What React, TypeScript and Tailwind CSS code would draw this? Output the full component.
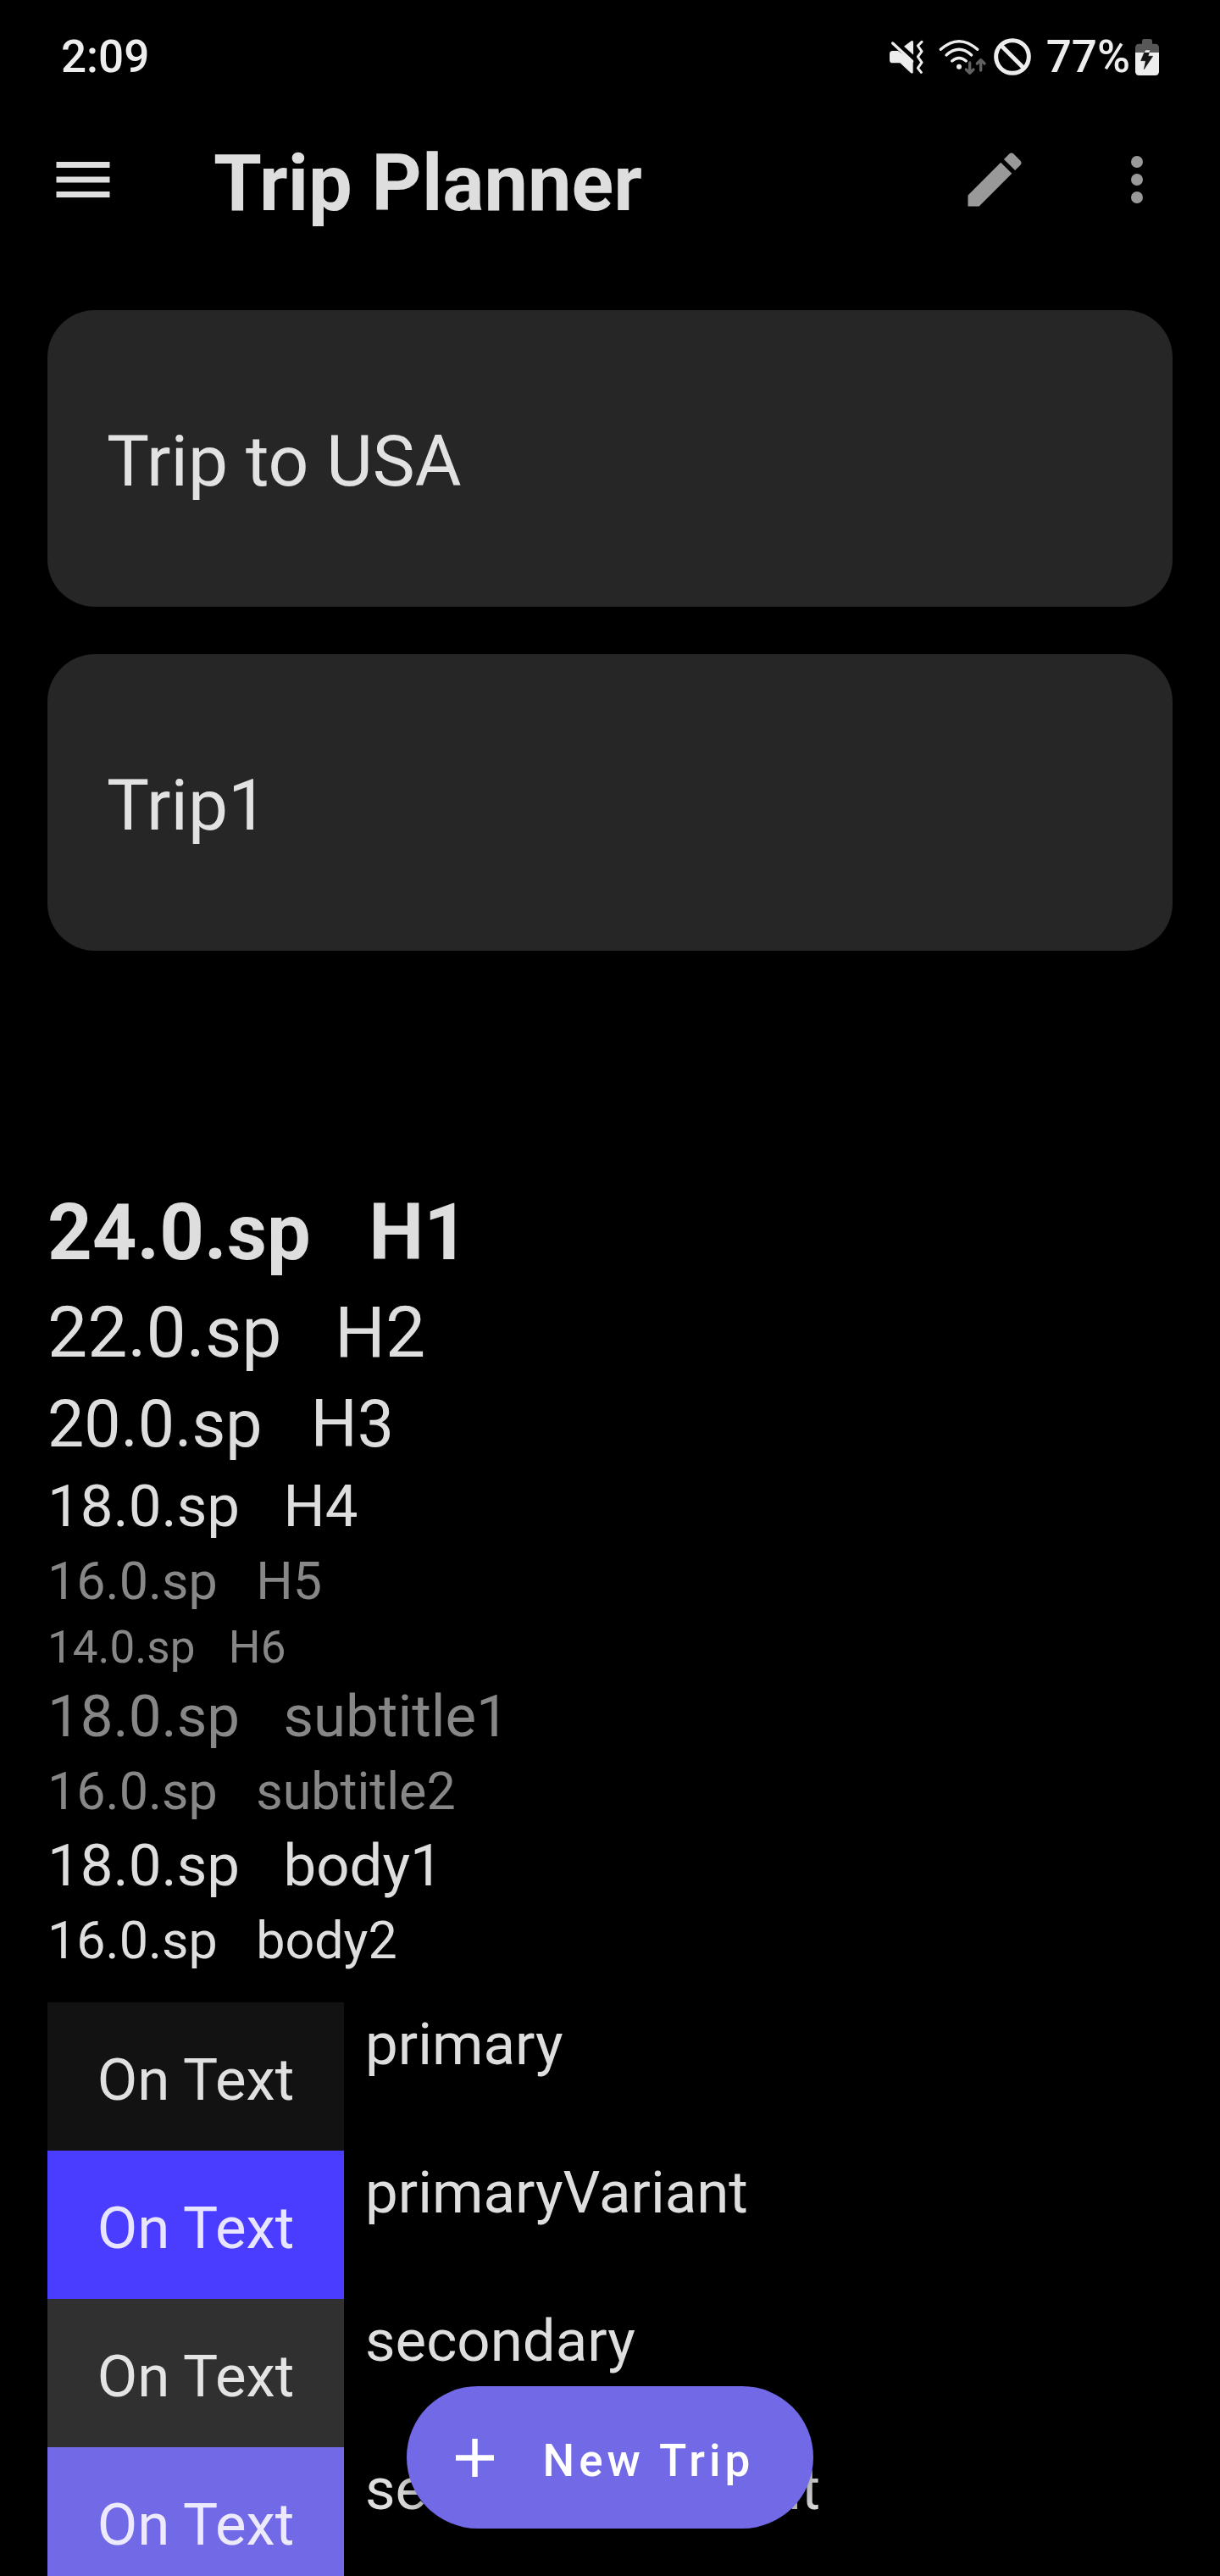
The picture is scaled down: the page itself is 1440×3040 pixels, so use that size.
import React from "react";

const trips = ["Trip to USA", "Trip1"];

const typography = [
  { size: "24.0.sp", name: "H1", style: "text-[92px] leading-[123px] font-bold text-[#dedede]" },
  { size: "22.0.sp", name: "H2", style: "text-[84px] leading-[114px] text-[#dedede]" },
  { size: "20.0.sp", name: "H3", style: "text-[77px] leading-[102px] text-[#dedede]" },
  { size: "18.0.sp", name: "H4", style: "text-[69px] leading-[92px] text-[#dedede]" },
  { size: "16.0.sp", name: "H5", style: "text-[61px] leading-[84px] text-[#878787]" },
  { size: "14.0.sp", name: "H6", style: "text-[53px] leading-[72px] text-[#878787]" },
  { size: "18.0.sp", name: "subtitle1", style: "text-[69px] leading-[92px] text-[#878787]" },
  { size: "16.0.sp", name: "subtitle2", style: "text-[61px] leading-[84px] text-[#878787]" },
  { size: "18.0.sp", name: "body1", style: "text-[69px] leading-[92px] text-[#dedede]" },
  { size: "16.0.sp", name: "body2", style: "text-[61px] leading-[84px] text-[#dedede]" },
];

const swatches = [
  { name: "primary", style: "bg-[#121212] text-[#e0e0e0]" },
  { name: "primaryVariant", style: "bg-[#4a3dff] text-[#e7e5ff]" },
  { name: "secondary", style: "bg-[#303030] text-[#e4e4e4]" },
  { name: "secondaryVariant", style: "bg-[#7169e6] text-[#eceafc]" },
];

function MuteIcon() {
  return (
    <svg viewBox="90 84 120 120" className="h-10 w-10" fill="#ededed" aria-hidden="true">
      <path d="M101 123h19L173 160v40q-3 5-8 1L127 166H101q-11 0-11-11v-21q0-11 11-11z" />
      <path d="M141 107 167 88q7-3 7 4v45z" />
      <path d="M112 92 180 153" stroke="#000" strokeWidth="9" />
      <path d="M101 96 170 160" stroke="#ededed" strokeWidth="10" strokeLinecap="round" />
      <path
        d="M204 91 190 105 204 125 190 144 204 164 190 184 202 199"
        fill="none"
        stroke="#ededed"
        strokeWidth="9"
        strokeLinecap="round"
        strokeLinejoin="round"
      />
    </svg>
  );
}

function WifiIcon() {
  return (
    <svg viewBox="264 78 171 132" className="h-11 w-[57px]" fill="none" strokeLinecap="round" strokeLinejoin="round" aria-hidden="true">
      <g stroke="#ededed" strokeWidth="10">
        <path d="M271 118Q336 60 401 118" />
        <path d="M291 138Q336 98 380 138" />
        <path d="M311 159Q336 138 361 159" />
      </g>
      <circle cx="336" cy="179" r="9" fill="#ededed" />
      <g stroke="#616161" strokeWidth="10">
        <path d="M374 165v37M361 189l13 13 13-13" />
        <path d="M413 192v-37M400 168l13-13 13 13" />
      </g>
    </svg>
  );
}

function BlockedIcon() {
  return (
    <svg viewBox="459 75 132 132" className="h-11 w-11" fill="none" stroke="#ededed" strokeWidth="15" aria-hidden="true">
      <circle cx="525" cy="141" r="58" />
      <path d="M483 99 567 183" />
    </svg>
  );
}

function BatteryIcon() {
  return (
    <svg viewBox="960 81 84 129" className="h-[43px] w-7" aria-hidden="true">
      <path d="M984 98v-10q0-7 7-7h22q7 0 7 7v10h10q14 0 14 14v17h-84v-17q0-14 14-14z" fill="#575757" />
      <path d="M960 129h84v67q0 14-14 14h-56q-14 0-14-14z" fill="#ededed" />
      <path d="M992 129h17l-4 13h17L991 188l6-30h-17z" fill="#141414" stroke="#141414" strokeWidth="2" strokeLinejoin="round" />
      <path d="M992 129 997 121h15l-3 8z" fill="#ededed" />
    </svg>
  );
}

function StatusBar() {
  return (
    <div className="flex h-[114px] shrink-0 items-center justify-between px-[72px] pt-5 text-[53px] leading-[64px] font-medium text-[#ededed]">
      <time>2:09</time>
      <div className="flex items-center">
        <MuteIcon />
        <div className="ml-[18px]">
          <WifiIcon />
        </div>
        <div className="ml-2">
          <BlockedIcon />
        </div>
        <span className="ml-[18px]">77%</span>
        <div className="ml-1.5">
          <BatteryIcon />
        </div>
      </div>
    </div>
  );
}

function AppBar() {
  return (
    <header className="flex h-[196px] shrink-0 items-center px-14">
      <button type="button" aria-label="Menu" className="text-[#dedede]">
        <svg viewBox="0 0 24 24" className="h-[84px] w-[84px]" fill="currentColor">
          <path d="M3 18h18v-2H3v2zm0-5h18v-2H3v2zm0-7v2h18V6H3z" />
        </svg>
      </button>
      <h1 className="ml-28 flex-1 pt-2 text-[92px] leading-[123px] font-bold text-[#dedede]">Trip Planner</h1>
      <div className="flex gap-[84px] text-[#999999]">
        <button type="button" aria-label="Edit">
          <svg viewBox="0 0 24 24" className="h-[84px] w-[84px]" fill="currentColor">
            <path d="M3 17.25V21h3.75L17.81 9.94l-3.75-3.75L3 17.25zM20.71 7.04c.39-.39.39-1.02 0-1.41l-2.34-2.34c-.39-.39-1.02-.39-1.41 0l-1.83 1.83 3.75 3.75 1.83-1.83z" />
          </svg>
        </button>
        <button type="button" aria-label="More options">
          <svg viewBox="0 0 24 24" className="h-[84px] w-[84px]" fill="currentColor">
            <circle cx="12" cy="6" r="2" />
            <circle cx="12" cy="12" r="2" />
            <circle cx="12" cy="18" r="2" />
          </svg>
        </button>
      </div>
    </header>
  );
}

export default function App() {
  return (
    <div className="relative flex h-screen flex-col overflow-hidden bg-black font-['Roboto',sans-serif]">
      <StatusBar />
      <AppBar />
      <main className="min-h-0 flex-1 overflow-y-auto px-14 pt-14 [scrollbar-width:none]">
        <div className="flex flex-col gap-14">
          {trips.map((trip) => (
            <button
              key={trip}
              type="button"
              className="flex h-[350px] items-center rounded-[56px] bg-[#262626] px-[70px] pt-2 text-left text-[84px] leading-[114px] text-[#e2e2e2]"
            >
              {trip}
            </button>
          ))}
        </div>

        <section className="mt-[271px]" aria-label="Typography">
          {typography.map((item) => (
            <p key={item.name} className={`whitespace-pre ${item.style}`}>
              {`${item.size}   ${item.name}`}
            </p>
          ))}
        </section>

        <ul className="mt-[31px] text-[69px] leading-[92px]">
          {swatches.map((swatch) => (
            <li key={swatch.name} className="flex gap-[25px]">
              <div className={`flex h-[175px] w-[350px] items-center justify-center pt-2 ${swatch.style}`}>On Text</div>
              <span className="pt-1 text-[#dedede]">{swatch.name}</span>
            </li>
          ))}
        </ul>
      </main>

      <div className="pointer-events-none absolute inset-x-0 bottom-14 flex justify-center">
        <button
          type="button"
          className="pointer-events-auto flex h-[168px] items-center gap-[42px] rounded-full bg-[#7169e6] pr-[70px] pl-[42px] text-[53px] leading-[72px] font-medium tracking-[5px] text-white shadow-[0_12px_24px_rgba(0,0,0,0.3)]"
        >
          <svg viewBox="0 0 24 24" className="h-[77px] w-[77px]" fill="currentColor" aria-hidden="true">
            <path d="M19 13h-6v6h-2v-6H5v-2h6V5h2v6h6v2z" />
          </svg>
          <span className="pt-2">New Trip</span>
        </button>
      </div>
    </div>
  );
}
